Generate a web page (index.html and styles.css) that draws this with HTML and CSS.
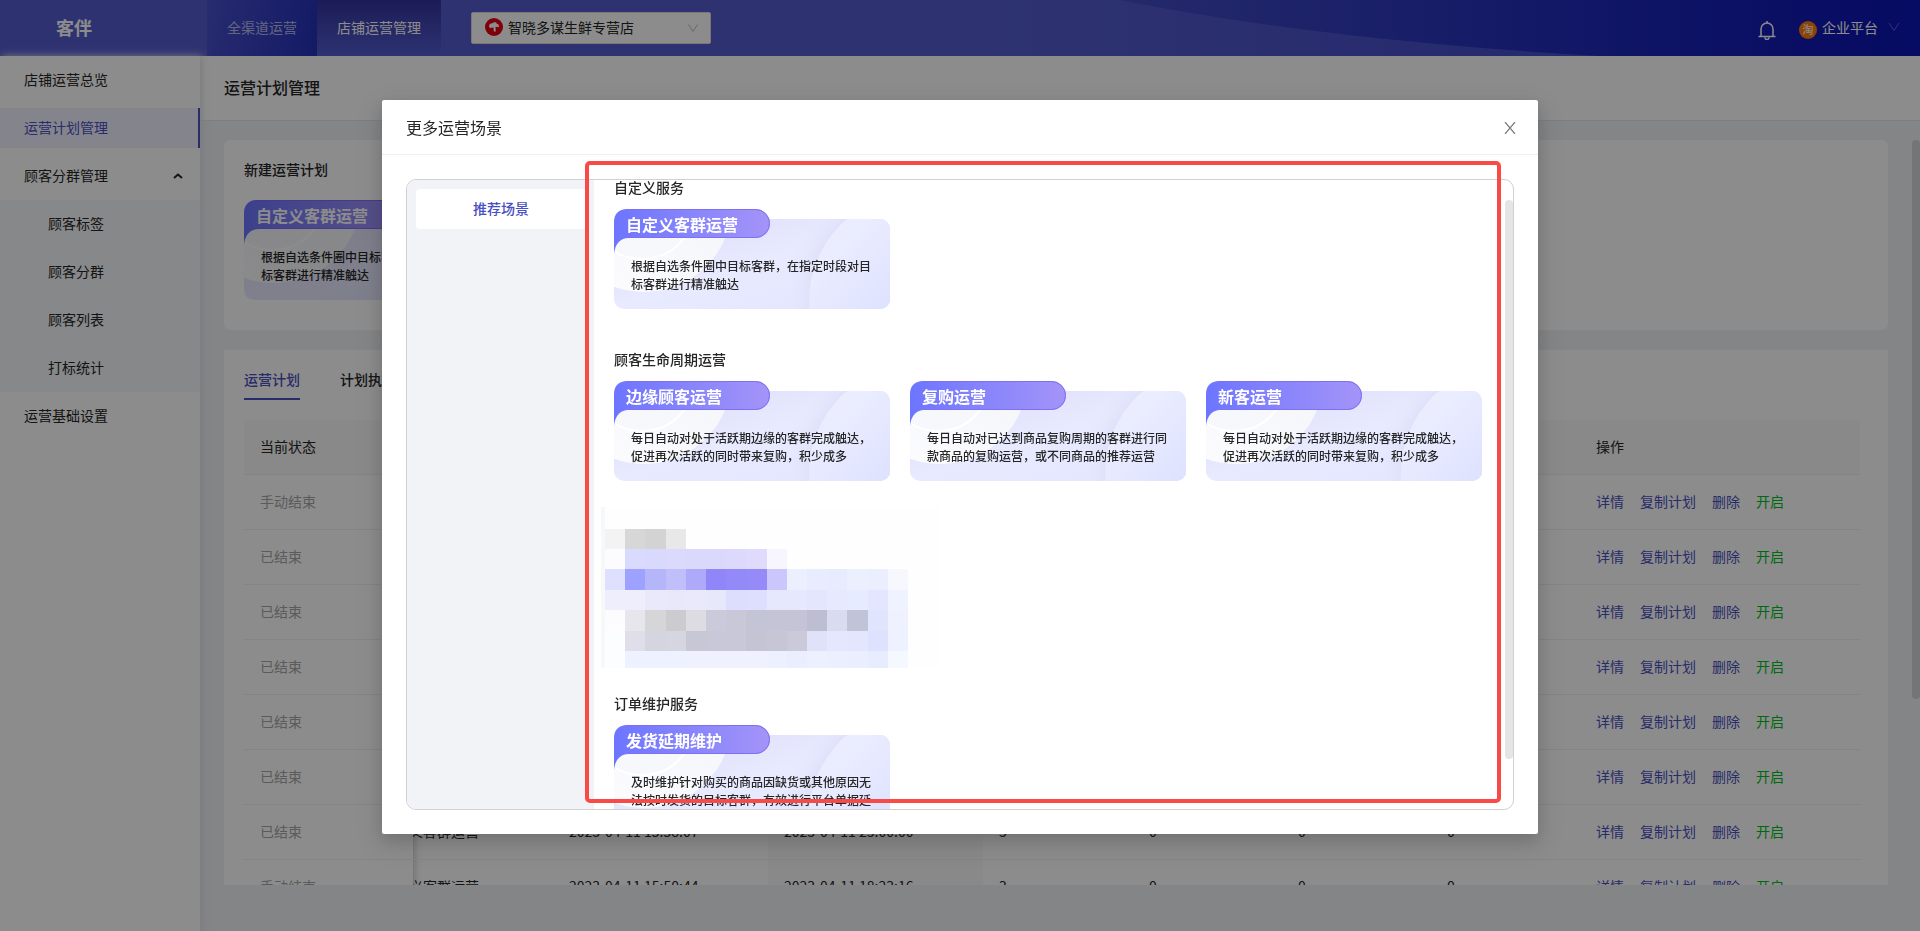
FILE: index.html
```html
<!DOCTYPE html>
<html lang="zh-CN">
<head>
<meta charset="utf-8">
<title>运营计划管理</title>
<link rel="stylesheet" href="styles.css">
</head>
<body>
<svg class="defs" width="0" height="0" aria-hidden="true">
  <defs>
    <linearGradient id="g-body" x1="0" y1="0" x2="1" y2="1">
      <stop offset="0" stop-color="#dcdcf8"/><stop offset=".5" stop-color="#e8eaff"/><stop offset="1" stop-color="#e2e5ff"/>
    </linearGradient>
    <linearGradient id="g-ribbon" x1="0" y1="0" x2="1" y2="0">
      <stop offset="0" stop-color="#6d75ff"/><stop offset="1" stop-color="#a494f8"/>
    </linearGradient>
    <linearGradient id="g-ring" x1="0" y1="1" x2="1" y2="0">
      <stop offset="0" stop-color="#fdfdff"/><stop offset=".6" stop-color="#f6f7fb"/><stop offset="1" stop-color="#ececf8"/>
    </linearGradient>
    <linearGradient id="g-disc" x1="0" y1="0" x2="1" y2="1">
      <stop offset="0" stop-color="#eff1ff"/><stop offset=".2" stop-color="#eaecff"/><stop offset=".5" stop-color="#dce0ff"/><stop offset="1" stop-color="#dce0ff"/>
    </linearGradient>
    <radialGradient id="g-shade">
      <stop offset=".8" stop-color="#dfe1fa"/><stop offset="1" stop-color="#e6e8fd" stop-opacity="0"/>
    </radialGradient>
    <clipPath id="c-body"><rect y="10" width="276" height="90" rx="10"/></clipPath>
  </defs>
  <symbol id="scene-art" viewBox="0 0 276 100">
    <g clip-path="url(#c-body)">
      <rect y="10" width="276" height="90" fill="url(#g-body)"/>
      <circle cx="302" cy="92" r="132" fill="url(#g-shade)"/>
      <circle cx="302" cy="92" r="107" fill="url(#g-disc)"/>
      <circle cx="30" cy="-5" r="88" fill="url(#g-ring)"/>
      <circle cx="28" cy="-3" r="53" fill="#f7f8fc" stroke="#fff" stroke-width="2"/>
    </g>
    <path d="M0 13C0 5 5 0 13 0H141.500a14.500 14.500 0 0 1 0 29H15C6 29 1 35 0 45Z" fill="url(#g-ribbon)"/>
    <path d="M12 .5H141.500a14 14 0 0 1 0 28H14" fill="none" stroke="#7d70f4" stroke-width="1"/>
  </symbol>
</svg>

<header class="topbar">
  <svg class="topbar-wave" viewBox="0 0 1920 56" preserveAspectRatio="none" aria-hidden="true">
    <path d="M0 0H1120C1250 26 1420 46 1600 56H0Z"/>
  </svg>
  <div class="logo">客伴</div>
  <nav class="topnav">
    <a href="#" class="topnav-link">全渠道运营</a>
    <a href="#" class="topnav-link topnav-active">店铺运营管理</a>
  </nav>
  <div class="shop">
    <svg class="shop-icon" viewBox="0 0 18 18" aria-hidden="true"><circle cx="9" cy="9" r="9" fill="#e60012"/><path d="M4 8.500C4 6 6 5 7.500 5.300 8.500 3.800 11.500 4 11.800 5.700 14 6 14.500 8 13.500 9.300L10.500 8.800 10.800 13.500H8.800L8.500 9.500 5 10Z" fill="#fff"/></svg>
    <select class="shop-select" aria-label="店铺"><option>智晓多谋生鲜专营店</option></select>
    <svg class="shop-arrow" viewBox="0 0 12 12" aria-hidden="true"><path d="M1.500 2.500 6 9.500 10.500 2.500"/></svg>
  </div>
  <div class="account">
    <button class="bell" aria-label="通知"><svg viewBox="0 0 20 20" aria-hidden="true"><path d="M4 16.500V9a6 6 0 0 1 12 0v7.500M1.500 16.500h17M10 3V1M8 17.500a2 2 0 0 0 4 0"/></svg></button>
    <button class="user"><span class="user-badge">淘</span>企业平台<svg class="user-arrow" viewBox="0 0 12 12" aria-hidden="true"><path d="M1 2 6 9.500 11 2"/></svg></button>
  </div>
</header>

<div class="shell">
  <aside class="sidebar">
    <a href="#" class="menu-item">店铺运营总览</a>
    <a href="#" class="menu-item menu-current">运营计划管理</a>
    <button class="menu-item menu-parent">顾客分群管理<svg viewBox="0 0 10 6" aria-hidden="true"><path d="M1 5 5 1.500 9 5"/></svg></button>
    <div class="submenu">
      <a href="#" class="menu-item">顾客标签</a>
      <a href="#" class="menu-item">顾客分群</a>
      <a href="#" class="menu-item">顾客列表</a>
      <a href="#" class="menu-item">打标统计</a>
    </div>
    <a href="#" class="menu-item">运营基础设置</a>
  </aside>

  <main class="main">
    <h1 class="page-title">运营计划管理</h1>
    <div class="content">
      <section class="panel create">
        <h2 class="panel-title">新建运营计划</h2>
        <article class="scene">
          <svg class="scene-art"><use href="#scene-art"/></svg>
          <h4 class="scene-name">自定义客群运营</h4>
          <p class="scene-desc">根据自选条件圈中目标客群，在指定时段对目标客群进行精准触达</p>
        </article>
      </section>
      <section class="panel plans">
        <div class="tabs">
          <button class="tab tab-active">运营计划</button>
          <button class="tab">计划执行</button>
        </div>
        <table class="table">
          <colgroup><col class="c-status"><col class="c-name"><col class="c-date"><col class="c-date"><col class="c-count"><col class="c-num"><col class="c-num"><col class="c-num"><col class="c-ops"></colgroup>
          <thead><tr><th>当前状态</th><th></th><th></th><th></th><th></th><th></th><th></th><th></th><th>操作</th></tr></thead>
          <tbody>
            <tr><td>手动结束</td><td></td><td></td><td></td><td></td><td></td><td></td><td></td><td class="ops"><a href="#">详情</a><a href="#">复制计划</a><a href="#">删除</a><a href="#" class="on">开启</a></td></tr>
            <tr><td>已结束</td><td></td><td></td><td></td><td></td><td></td><td></td><td></td><td class="ops"><a href="#">详情</a><a href="#">复制计划</a><a href="#">删除</a><a href="#" class="on">开启</a></td></tr>
            <tr><td>已结束</td><td></td><td></td><td></td><td></td><td></td><td></td><td></td><td class="ops"><a href="#">详情</a><a href="#">复制计划</a><a href="#">删除</a><a href="#" class="on">开启</a></td></tr>
            <tr><td>已结束</td><td></td><td></td><td></td><td></td><td></td><td></td><td></td><td class="ops"><a href="#">详情</a><a href="#">复制计划</a><a href="#">删除</a><a href="#" class="on">开启</a></td></tr>
            <tr><td>已结束</td><td></td><td></td><td></td><td></td><td></td><td></td><td></td><td class="ops"><a href="#">详情</a><a href="#">复制计划</a><a href="#">删除</a><a href="#" class="on">开启</a></td></tr>
            <tr><td>已结束</td><td></td><td></td><td></td><td></td><td></td><td></td><td></td><td class="ops"><a href="#">详情</a><a href="#">复制计划</a><a href="#">删除</a><a href="#" class="on">开启</a></td></tr>
            <tr><td>已结束</td><td><div class="name">自定义客群运营</div></td><td>2023-04-11 15:58:07</td><td>2023-04-11 23:00:00</td><td>3</td><td>0</td><td>0</td><td>0</td><td class="ops"><a href="#">详情</a><a href="#">复制计划</a><a href="#">删除</a><a href="#" class="on">开启</a></td></tr>
            <tr><td>手动结束</td><td><div class="name">自定义客群运营</div></td><td>2023-04-11 15:50:44</td><td>2023-04-11 18:23:16</td><td>3</td><td>0</td><td>0</td><td>0</td><td class="ops"><a href="#">详情</a><a href="#">复制计划</a><a href="#">删除</a><a href="#" class="on">开启</a></td></tr>
          </tbody>
        </table>
      </section>
      <div class="scrollbar page-scroll"></div>
    </div>
  </main>
</div>

<div class="mask">
  <div class="modal" role="dialog" aria-labelledby="modal-title">
    <div class="modal-head">
      <h2 class="modal-title" id="modal-title">更多运营场景</h2>
      <button class="close" aria-label="关闭"><svg viewBox="0 0 12 12" aria-hidden="true"><path d="M1 0 11 12M11 0 1 12"/></svg></button>
    </div>
    <div class="modal-body">
      <div class="picker">
        <div class="picker-side"><button class="picker-tab">推荐场景</button></div>
        <div class="picker-list">
          <section class="group">
            <h3 class="group-title">自定义服务</h3>
            <div class="scenes">
              <article class="scene">
                <svg class="scene-art"><use href="#scene-art"/></svg>
                <h4 class="scene-name">自定义客群运营</h4>
                <p class="scene-desc">根据自选条件圈中目标客群，在指定时段对目标客群进行精准触达</p>
              </article>
            </div>
          </section>
          <section class="group">
            <h3 class="group-title">顾客生命周期运营</h3>
            <div class="scenes">
              <article class="scene">
                <svg class="scene-art"><use href="#scene-art"/></svg>
                <h4 class="scene-name">边缘顾客运营</h4>
                <p class="scene-desc">每日自动对处于活跃期边缘的客群完成触达，促进再次活跃的同时带来复购，积少成多</p>
              </article>
              <article class="scene">
                <svg class="scene-art"><use href="#scene-art"/></svg>
                <h4 class="scene-name">复购运营</h4>
                <p class="scene-desc">每日自动对已达到商品复购周期的客群进行同款商品的复购运营，或不同商品的推荐运营</p>
              </article>
              <article class="scene">
                <svg class="scene-art"><use href="#scene-art"/></svg>
                <h4 class="scene-name">新客运营</h4>
                <p class="scene-desc">每日自动对处于活跃期边缘的客群完成触达，促进再次活跃的同时带来复购，积少成多</p>
              </article>
            </div>
          </section>
          <section class="group">
            <svg class="mosaic" viewBox="-4 0 340 161" shape-rendering="crispEdges" aria-hidden="true" id="mosaic"></svg>
          </section>
          <section class="group">
            <h3 class="group-title">订单维护服务</h3>
            <div class="scenes">
              <article class="scene">
                <svg class="scene-art"><use href="#scene-art"/></svg>
                <h4 class="scene-name">发货延期维护</h4>
                <p class="scene-desc">及时维护针对购买的商品因缺货或其他原因无法按时发货的目标客群，有效进行平台单据延</p>
              </article>
            </div>
          </section>
        </div>
        <div class="scrollbar list-scroll"></div>
      </div>
    </div>
    <div class="highlight"></div>
  </div>
</div>
<script src="mosaic.js"></script>
</body>
</html>
```
FILE: mosaic.js
```js
// Pixelated block that hides one group of the list: one colour per cell, top to bottom.
const rows = [
  [22, ''],
  [20, 'f3f3f3 d7d7d7 d3d3d3 e8e8e8'],
  [20, 'fcfcff d9dafe d9d9fd dbdafc dbd9fb dbd9fb dcd9fc e0dafc f7f6fe'],
  [21, 'dfe0fe 9da1ff b5b5fa c1bffb aeaaf9 9086f9 9489f9 968af9 cbc7fc eceffe e9ecfe e8eafd eceffe eaeefe f6f8fe'],
  [20, 'eeeefc eeeefc e9e9fb e8e8fa e9e9fb e7e8fa dddefe dedefe e6e9fd e6e9fe e3e6fd e7eafe e7ebff e3e6fe eff2ff'],
  [21, 'fcfcfe e6e6ec d6d6d9 cbcbd0 dcdce2 cacbda c8c8d9 c3c4d6 c4c4d6 c4c4d6 bebed2 d9dcee c1c4d8 e1e4fd eff1ff'],
  [20, 'fcfdff e0dfe9 d5d5df d6d6e0 c7c7d5 c8c8d8 c8c8d8 c4c4d4 c6c6d7 cacadb e0e2fa e4e7fe e4e6fe dfe2ff eef1ff'],
  [17, 'fcfdff eef1ff eef1ff eef1ff eff1ff eff1ff eff1ff eff1ff edf0ff ebeeff edf0ff ecefff ebeeff e8ecff f6f8ff']
];
const svg = document.getElementById('mosaic');
const cell = (x, y, w, h, fill) => {
  const r = document.createElementNS('http://www.w3.org/2000/svg', 'rect');
  for (const [k, v] of Object.entries({ x, y, width: w, height: h, fill })) r.setAttribute(k, v);
  svg.append(r);
};
cell(-4, 0, 340, 161, '#fefefe');
cell(-4, 0, 4, 161, '#f7f8fa');
let y = 0;
for (const [h, colours] of rows) {
  colours.split(' ').filter(Boolean).forEach((c, i) => {
    const x = Math.round(i * 20.2);
    cell(x, y, Math.round((i + 1) * 20.2) - x, h, '#' + c);
  });
  y += h;
}
```
FILE: styles.css
```css
* { box-sizing: border-box; }

body {
  margin: 0;
  height: 100vh;
  overflow: hidden;
  display: flex;
  flex-direction: column;
  font: 14px/22px "Noto Sans CJK SC", "Noto Sans", sans-serif;
  color: #262626;
  background: #f0f2f5;
}

h1, h2, h3, h4, p { margin: 0; font-weight: 500; }
a { color: inherit; text-decoration: none; }
button { border: 0; padding: 0; background: none; font: inherit; color: inherit; cursor: pointer; text-align: left; }
.defs { position: absolute; }

/* top bar */
.topbar {
  position: relative;
  flex: none;
  display: flex;
  height: 56px;
  color: #fff;
  background: linear-gradient(90deg, #4c55c8 50%, #3a44c0 65%, #1822b8 88%, #0c14b4);
}
.topbar-wave { position: absolute; inset: 0; width: 100%; height: 100%; fill: #5a61d2; fill-opacity: .62; }
.logo { position: relative; width: 207px; padding-left: 56px; font-size: 18px; font-weight: 700; line-height: 54px; }
.topnav { position: relative; display: flex; line-height: 54px; }
.topnav-link { padding: 0 20px 2px; color: rgba(255, 255, 255, .65); background: linear-gradient(100deg, #4850cc, #2430b8); }
.topnav-active { color: #fff; background: linear-gradient(#32349f, #555cd0); }
.shop { position: relative; width: 240px; margin: 12px 0 0 30px; height: 32px; }
.shop-select {
  width: 100%; height: 100%; padding: 0 32px 2px 36px;
  appearance: none; border: 1px solid #d9d9d9; border-radius: 2px;
  background: #fff; font: inherit; color: #262626;
}
.shop-icon { position: absolute; left: 14px; top: 6px; width: 18px; height: 18px; }
.shop-arrow { position: absolute; right: 12px; top: 10px; width: 12px; height: 12px; fill: none; stroke: #bfbfbf; }
.account { position: relative; display: flex; align-items: center; gap: 22px; margin-left: auto; padding: 0 20px 2px 0; }
.bell svg { display: block; width: 20px; height: 20px; margin: 6px 0 0 -1px; fill: none; stroke: #fff; stroke-width: 1.5; }
.user { display: flex; align-items: center; gap: 5px; }
.user-badge { width: 18px; height: 18px; margin-top: 6px; border-radius: 50%; background: #ff7d0a; font-size: 11px; line-height: 17px; text-align: center; }
.user-arrow { width: 12px; height: 12px; margin-left: 5px; fill: none; stroke: #5560d8; }

/* side menu */
.shell { flex: 1; display: flex; min-height: 0; }
.sidebar { position: relative; z-index: 1; flex: none; width: 200px; background: #fff; box-shadow: 2px 0 8px #dfe0ea; }
.menu-item { display: block; width: 100%; margin: 4px 0 8px; padding: 0 0 2px 24px; line-height: 38px; }
.menu-item + .menu-item { margin-top: 8px; }
.menu-current { color: #4a50c0; background: #f0f0ff; border-right: 2px solid #4a50c0; }
.menu-parent { display: flex; justify-content: space-between; align-items: center; height: 40px; margin-bottom: 4px; padding-right: 17px; }
.menu-parent svg { width: 10px; height: 6px; margin-top: 2px; fill: none; stroke: #262626; stroke-width: 2; }
.submenu { display: flow-root; background: #f6f8fa; }
.submenu .menu-item { padding-left: 48px; }
.submenu .menu-item:last-child { margin-bottom: 4px; }

/* page */
.main { flex: 1; min-width: 0; display: flex; flex-direction: column; }
.page-title { flex: none; height: 65px; padding-left: 24px; font-size: 16px; line-height: 62px; background: #fff; border-bottom: 1px solid #e4e5ec; }
.content { position: relative; flex: 1; min-height: 0; display: flex; flex-direction: column; gap: 20px; padding: 19px 32px 46px 24px; }
.panel { background: #fff; border-radius: 6px; padding: 20px; }
.create { flex: none; height: 190px; }
.panel-title { font-size: 14px; line-height: 18px; margin-bottom: 22px; }
.plans { flex: 1; min-height: 0; overflow: hidden; padding: 10px 28px 0 20px; border-radius: 0; }
.tabs { display: flex; gap: 40px; height: 60px; align-items: flex-start; }
.tab { height: 40px; font-weight: 500; border-bottom: 2px solid transparent; }
.tab-active { color: #4a50c0; border-color: #4a50c0; }

.table { width: 100%; table-layout: fixed; border-collapse: separate; border-spacing: 0; }
.c-status { width: 169px; }
.c-name { width: 140px; }
.c-date { width: 215px; }
.c-count { width: 150px; }
.c-num { width: 149px; }
.table th, .table td { height: 55px; padding: 0 16px 2px; border-bottom: 1px solid #f0f0f0; text-align: left; font-weight: 400; white-space: nowrap; }
.table th { background: #fafafa; }
.table td:first-child { position: relative; z-index: 1; background: #fff; color: #a6a6a6; }
.table td:nth-child(2) { box-shadow: inset 8px 0 8px -8px rgba(0, 0, 0, .3); }
.table td:nth-child(4) { background: #fafafa; }
.name { margin-left: -48px; }
.ops a { margin-right: 16px; color: #4a50c0; }
.ops a.on { color: #00c020; }

.scrollbar { position: absolute; width: 8px; border-radius: 4px; background: #e5e5e5; }
.page-scroll { right: 0; top: 19px; height: 69%; background: #d4d5d9; }

/* scene card */
.scene { position: relative; width: 276px; height: 100px; padding: 4px 17px 0; }
.scene-art { position: absolute; inset: 0; width: 276px; height: 100px; }
.scene-name { position: relative; margin-left: -5px; font-size: 16px; line-height: 22px; font-weight: 700; color: #fff; }
.scene-desc { position: relative; width: 242px; margin-top: 22px; font-size: 12px; line-height: 18px; }

/* dialog */
.mask { position: fixed; inset: 0; z-index: 10; display: flex; justify-content: center; align-items: flex-start; padding-top: 100px; background: rgba(0, 0, 0, .45); }
.modal { position: relative; width: 1156px; max-width: calc(100vw - 32px); background: #fff; border-radius: 2px; box-shadow: 0 6px 16px rgba(0, 0, 0, .14), 0 9px 28px 8px rgba(0, 0, 0, .08); }
.modal-head { display: flex; justify-content: space-between; align-items: center; padding: 16px 22px 16px 24px; border-bottom: 1px solid #f0f0f0; }
.modal-title { font-size: 16px; line-height: 22px; font-weight: 400; }
.close svg { display: block; width: 12px; height: 12px; margin-top: 2px; fill: none; stroke: #7a7a7a; stroke-width: 1.2; }
.modal-body { padding: 24px; }
.picker { position: relative; display: flex; height: calc(100vh - 300px); overflow: hidden; border: 1px solid #d0d0d0; border-radius: 10px; }
.picker-side { flex: none; width: 187px; padding: 9px 8px 9px 9px; background: #f2f3f6; }
.picker-tab { width: 100%; height: 40px; padding-bottom: 2px; border-radius: 4px; background: #fff; color: #4a50c0; font-weight: 500; text-align: center; }
.picker-list { flex: 1; min-width: 0; overflow: hidden; padding: 0 20px; }
.group { position: relative; height: 172px; }
.group-title { padding-bottom: 15px; font-size: 14px; line-height: 14px; }
.scenes { display: flex; gap: 20px; }
.mosaic { position: absolute; left: -13px; top: -17px; width: 340px; height: 161px; }
.list-scroll { right: 0; top: 20px; bottom: 50px; }
.highlight { position: absolute; left: 203px; right: 37px; top: 61px; bottom: 31px; border: 4px solid #f94a46; border-radius: 5px; pointer-events: none; }
```
